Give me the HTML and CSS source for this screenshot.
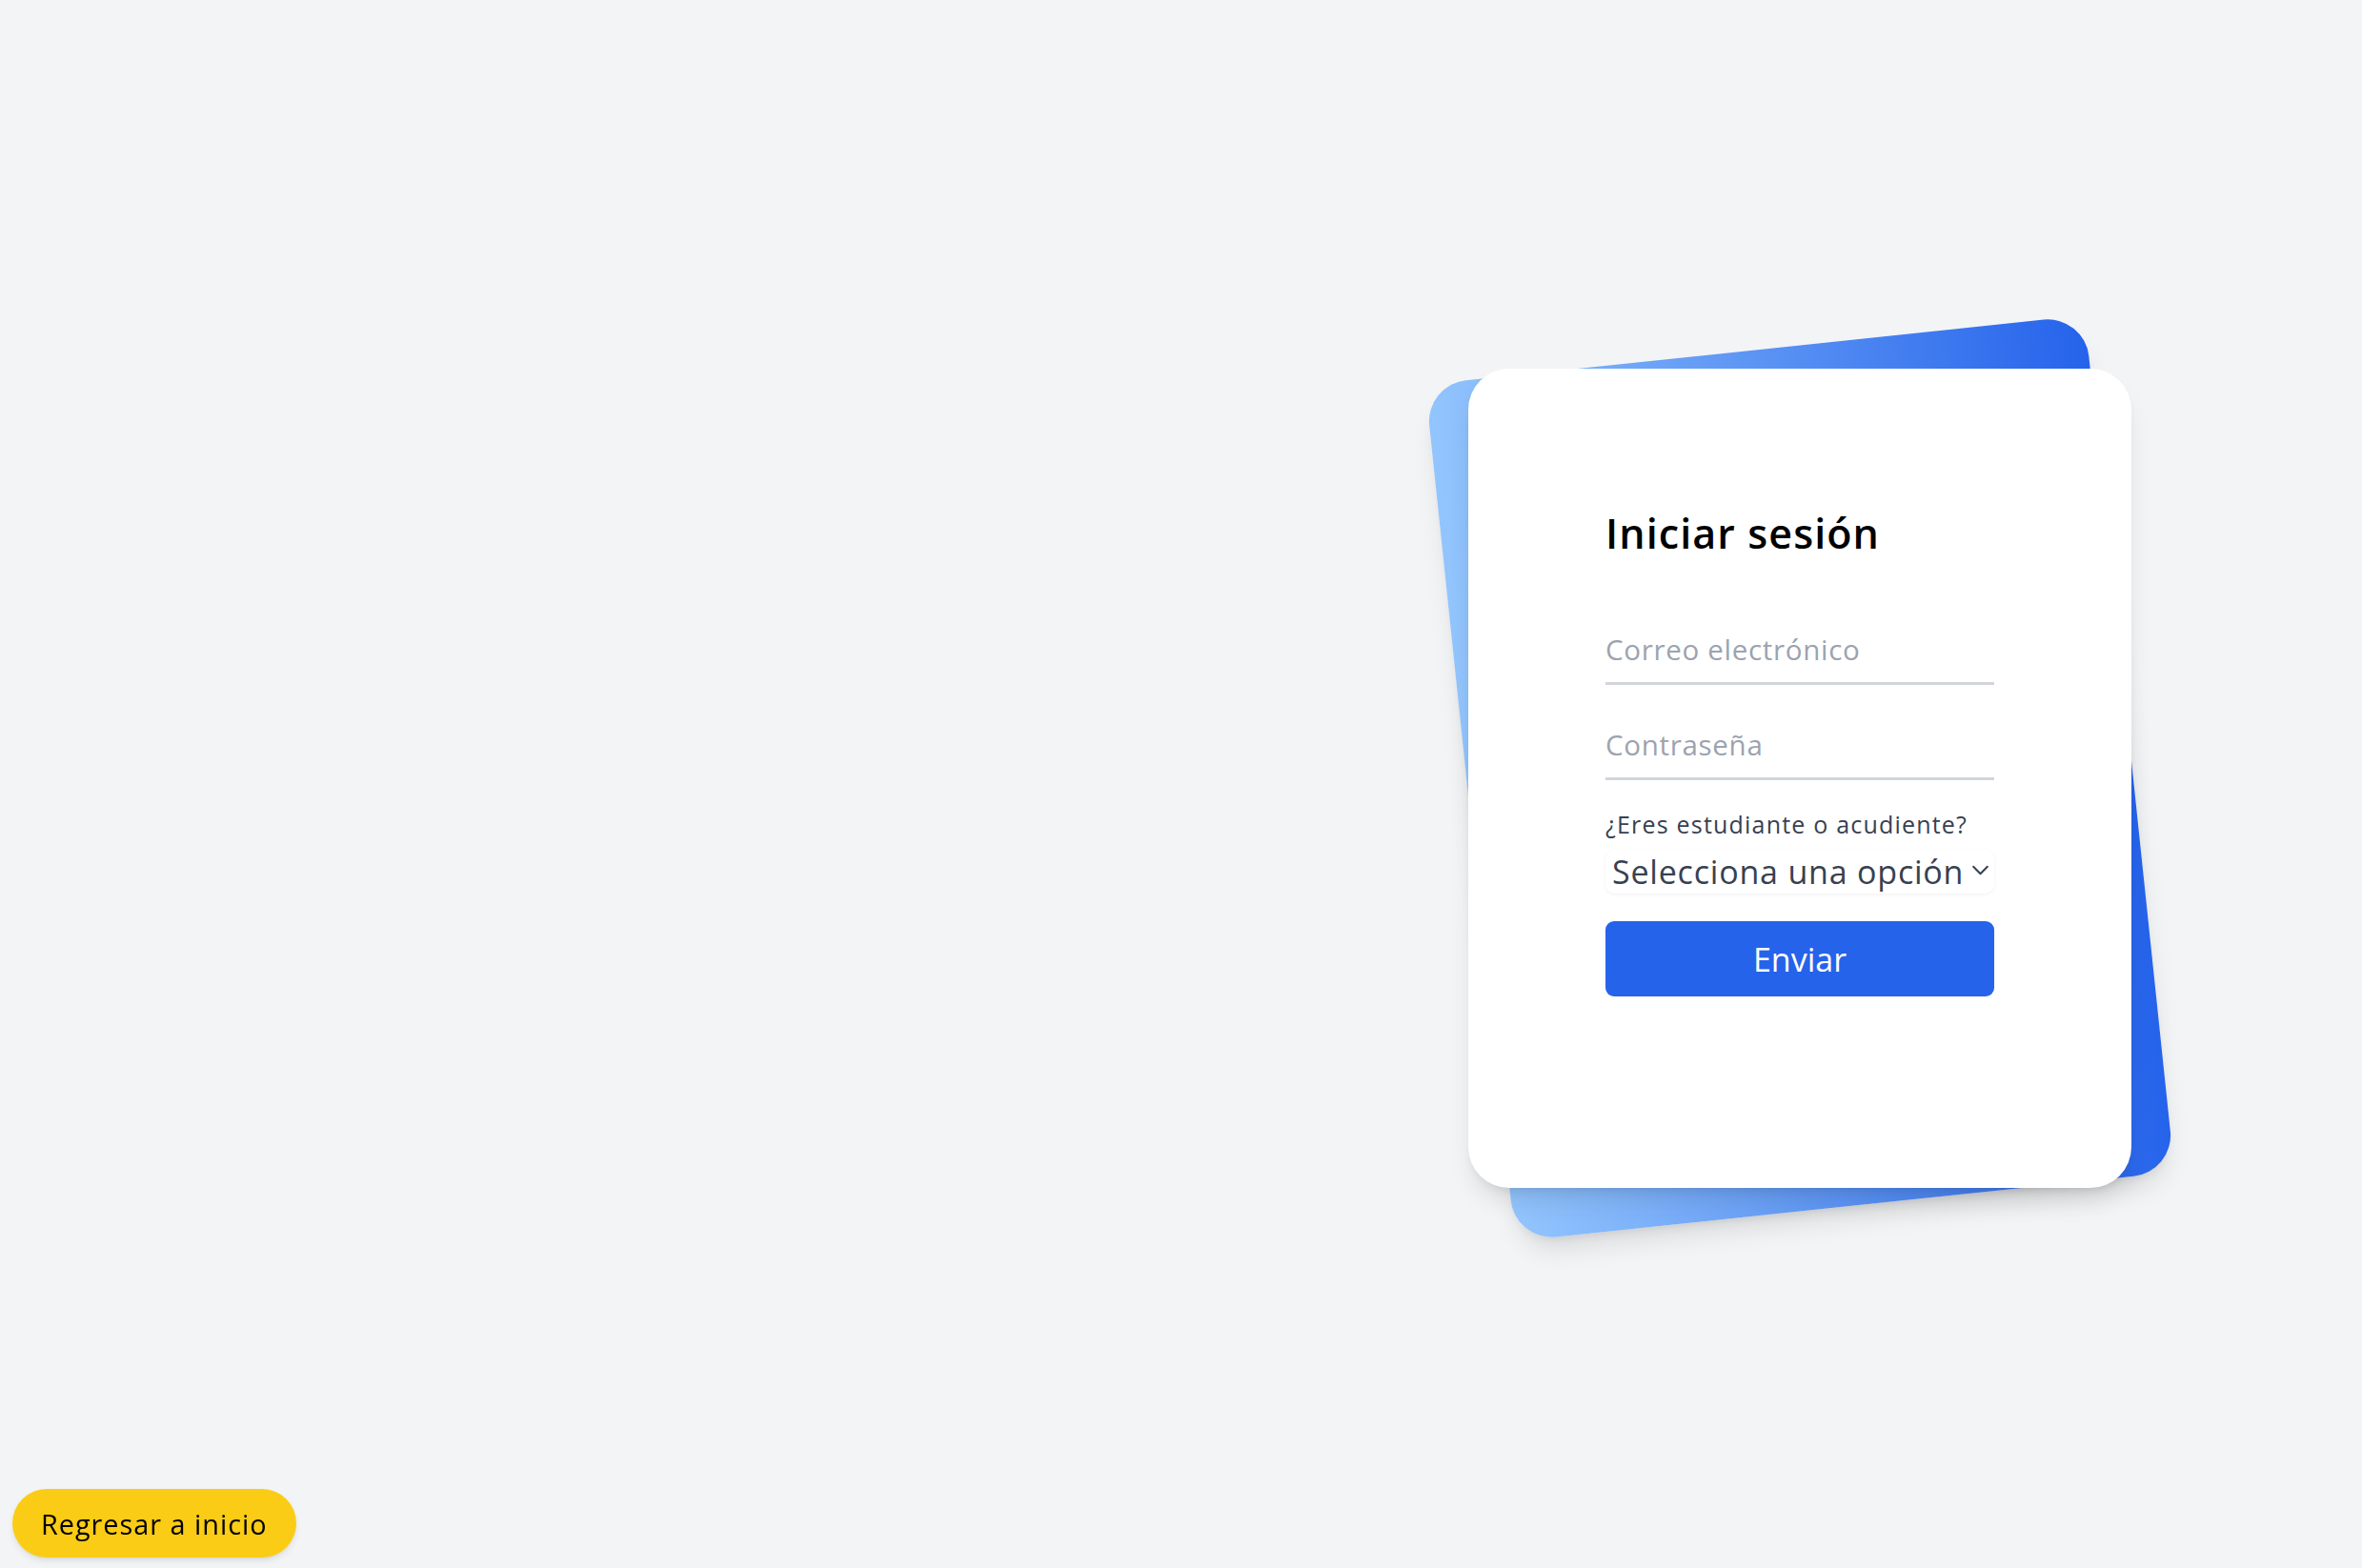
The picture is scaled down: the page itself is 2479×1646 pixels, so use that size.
FILE: index.html
```html
<!DOCTYPE html>
<html lang="es">
<head>
<meta charset="utf-8">
<title>Iniciar sesión</title>
<link rel="stylesheet" href="styles.css">
</head>
<body>
<main class="page">
  <div class="card-wrap">
    <div class="card-back"></div>
    <div class="card">
      <h1 class="title">Iniciar sesión</h1>
      <form class="form">
        <input class="field" type="email" placeholder="Correo electrónico">
        <input class="field field-gap" type="password" placeholder="Contraseña">
        <label class="label" for="rol">¿Eres estudiante o acudiente?</label>
        <div class="select-wrap">
          <select id="rol" class="select">
            <option>Selecciona una opción</option>
            <option>Estudiante</option>
            <option>Acudiente</option>
          </select>
          <svg class="chevron" width="20" height="12" viewBox="0 0 20 12"><path d="M2 2 L10 10 L18 2" fill="none" stroke="#374151" stroke-width="2.2" stroke-linecap="round" stroke-linejoin="round"/></svg>
        </div>
        <button type="button" class="submit">Enviar</button>
      </form>
    </div>
  </div>
</main>
<a class="home-btn" href="#">Regresar a inicio</a>
</body>
</html>
```
FILE: styles.css
```css
* { box-sizing: border-box; }
html, body { margin: 0; padding: 0; }
body {
  background: #f3f4f6;
  font-family: "Open Sans", "Liberation Sans", sans-serif;
  color: #111827;
}
.page {
  height: 1646px;
  display: flex;
  align-items: center;
  justify-content: flex-end;
  padding-right: 242px;
  padding-bottom: 12px;
}
.card-wrap {
  position: relative;
  width: 696px;
}
.card-back {
  position: absolute;
  top: -22px;
  bottom: -22px;
  left: 0;
  right: 0;
  background: linear-gradient(to right, #93c5fd, #2563eb);
  border-radius: 43px;
  transform: rotate(-6deg);
  box-shadow: 0 18px 27px -5px rgba(0,0,0,0.1), 0 7px 11px -6px rgba(0,0,0,0.1);
}
.card {
  position: relative;
  background: #fff;
  border-radius: 43px;
  height: 860px;
  padding: 144px 144px 0 144px;
  box-shadow: 0 18px 27px -5px rgba(0,0,0,0.1), 0 7px 11px -6px rgba(0,0,0,0.1);
}
.title {
  margin: 0;
  font-size: 43px;
  line-height: 58px;
  font-weight: 600;
  letter-spacing: 1.1px;
  color: #000;
}
.form {
  display: flex;
  flex-direction: column;
  margin-top: 58px;
}
.field {
  display: block;
  width: 100%;
  height: 72px;
  border: 0;
  border-bottom: 3px solid #d1d5db;
  font-family: inherit;
  font-size: 29.5px;
  letter-spacing: 0.7px;
  color: #111827;
  padding: 0;
  outline: none;
  background: transparent;
}
.field::placeholder { color: #9ca3af; }
.field-gap { margin-top: 28px; }
.label {
  margin-top: 28px;
  font-size: 25px;
  line-height: 36px;
  font-weight: 500;
  letter-spacing: 1.2px;
  color: #374151;
}
.select-wrap {
  position: relative;
  margin-top: 9px;
}
.select {
  -webkit-appearance: none;
  appearance: none;
  display: block;
  width: 100%;
  height: 46px;
  border: 0;
  border-radius: 10px;
  background: #fff;
  box-shadow: 0 1px 4px rgba(0,0,0,0.06);
  font-family: inherit;
  font-size: 34px;
  letter-spacing: 0.8px;
  color: #374151;
  padding: 0 30px 0 7px;
  outline: none;
}
.chevron {
  position: absolute;
  right: 5px;
  top: 16px;
  width: 19px;
  height: 11px;
  pointer-events: none;
}
.submit {
  margin-top: 29px;
  height: 79px;
  border: 0;
  border-radius: 9px;
  background: #2563eb;
  color: #fff;
  font-family: inherit;
  font-size: 34px;
  cursor: pointer;
}
.home-btn {
  position: fixed;
  left: 13px;
  bottom: 11px;
  height: 72px;
  display: flex;
  align-items: center;
  padding: 0 30px;
  background: #facc15;
  border-radius: 36px;
  color: #000;
  text-decoration: none;
  font-size: 28.8px;
  letter-spacing: 1px;
  box-shadow: 0 4px 8px -2px rgba(0,0,0,0.12), 0 2px 4px -2px rgba(0,0,0,0.08);
}
```
